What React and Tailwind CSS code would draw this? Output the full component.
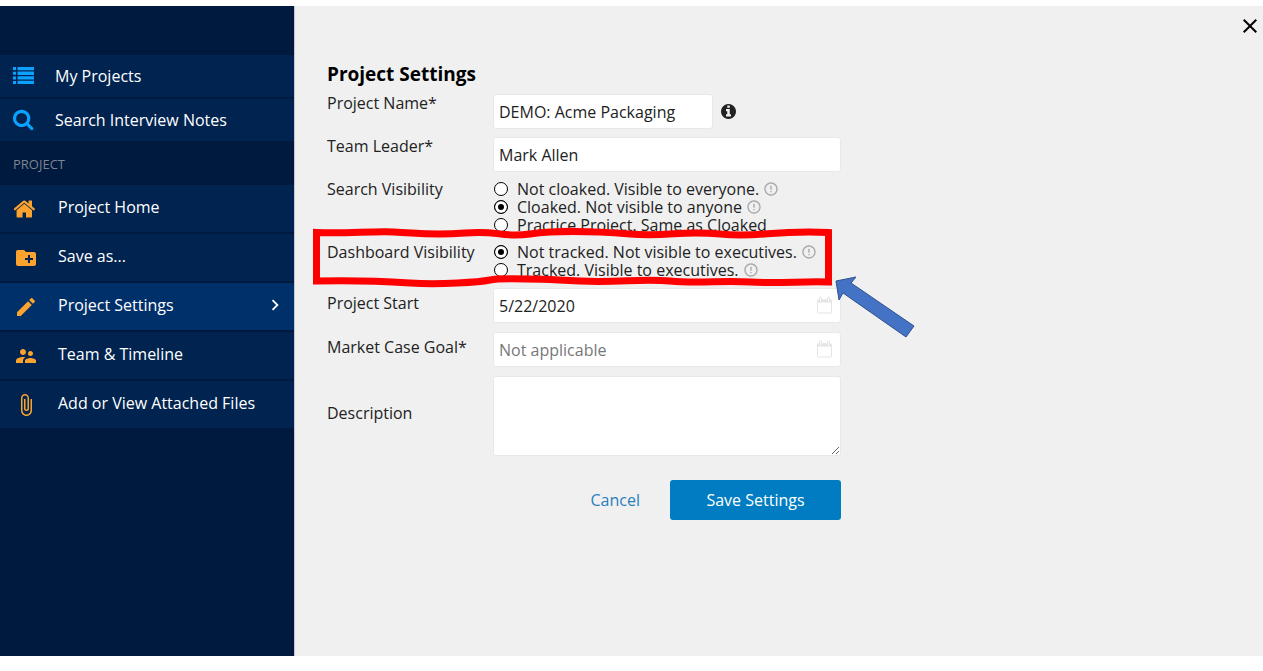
import React from 'react';
import {
  MdAttachFile,
  MdChevronRight,
  MdClose,
  MdCreateNewFolder,
  MdEdit,
  MdErrorOutline,
  MdSupervisorAccount,
} from 'react-icons/md';

function ListIcon() {
  return (
    <svg viewBox="0 0 22 18" width="22" height="18" fill="currentColor" aria-hidden="true">
      <path d="M0 0h3v3H0zM0 4.700h3v3H0zM0 9.400h3v3H0zM0 14h3v3H0z" />
      <path d="M4.500 0H21v3.300H4.500zM4.500 4.600H21v3.300H4.500zM4.500 9.200H21v3.300H4.500zM4.500 13.800H21v3.300H4.500z" />
    </svg>
  );
}

function SearchIcon() {
  return (
    <svg viewBox="64 64 1792 1792" width="22" height="22" fill="currentColor" aria-hidden="true">
      <path d="M1216 832q0-185-131.500-316.500t-316.500-131.500-316.500 131.500-131.500 316.500 131.500 316.500 316.500 131.500 316.500-131.500 131.500-316.500zm512 832q0 52-38 90t-90 38q-54 0-90-38l-343-342q-179 124-399 124-143 0-273.500-55.500t-225-150-150-225-55.500-273.500 55.500-273.500 150-225 225-150 273.500-55.500 273.500 55.500 225 150 150 225 55.500 273.500q0 220-124 399l343 343q37 37 37 90z" />
    </svg>
  );
}

function HomeIcon() {
  return (
    <svg viewBox="64 0 1792 1792" width="24" height="24" fill="currentColor" aria-hidden="true">
      <path d="M1408 992v480q0 26-19 45t-45 19h-384v-384h-256v384h-384q-26 0-45-19t-19-45v-480q0-1 .5-3t.5-3l575-474 575 474q1 2 1 6zm223-69l-62 74q-8 9-21 11h-3q-13 0-21-7l-692-577-692 577q-12 8-24 7-13-2-21-11l-62-74q-8-10-7-23.500t11-21.500l719-599q32-26 76-26t76 26l244 204v-195q0-14 9-23t23-9h192q14 0 23 9t9 23v408l219 182q10 8 11 21.500t-7 23.500z" />
    </svg>
  );
}

function InfoIcon() {
  return (
    <svg viewBox="128 128 1536 1536" width="15" height="15" fill="currentColor" aria-hidden="true">
      <path d="M1152 1376v-160q0-14-9-23t-23-9h-96v-512q0-14-9-23t-23-9h-320q-14 0-23 9t-9 23v160q0 14 9 23t23 9h96v320h-96q-14 0-23 9t-9 23v160q0 14 9 23t23 9h448q14 0 23-9t9-23zm-128-896v-160q0-14-9-23t-23-9h-192q-14 0-23 9t-9 23v160q0 14 9 23t23 9h192q14 0 23-9t9-23zm640 416q0 209-103 385.500t-279.500 279.500-385.500 103-385.500-103-279.500-279.500-103-385.500 103-385.500 279.500-279.500 385.500-103 385.500 103 279.500 279.500 103 385.500z" />
    </svg>
  );
}

function CalendarIcon() {
  return (
    <svg
      viewBox="0 0 16 18"
      className="pointer-events-none absolute right-2 top-2 h-[18px] w-4 text-[#e4e4e4]"
      aria-hidden="true"
    >
      <rect x="0.5" y="4" width="14" height="13" rx="1" fill="none" stroke="currentColor" />
      <path d="M0.500 3.500h14v3h-14z" fill="currentColor" />
      <path d="M3.500 2v3M11.500 2v3" stroke="currentColor" strokeWidth="3" strokeLinecap="round" />
      <path d="M3.500 2v3M11.500 2v3" stroke="#fff" strokeWidth="1" strokeLinecap="round" />
    </svg>
  );
}

const mainLinks = [
  { label: 'My Projects', icon: <ListIcon /> },
  { label: 'Search Interview Notes', icon: <SearchIcon /> },
];

const projectLinks = [
  { label: 'Project Home', icon: <HomeIcon /> },
  { label: 'Save as...', icon: <MdCreateNewFolder size={24} /> },
  { label: 'Project Settings', icon: <MdEdit size={24} />, active: true },
  { label: 'Team & Timeline', icon: <MdSupervisorAccount size={24} /> },
  { label: 'Add or View Attached Files', icon: <MdAttachFile size={24} /> },
];

function Sidebar() {
  return (
    <nav className="w-[295px] shrink-0 border-r border-[#c4c8d0] bg-[#00193e] pt-[49px] text-base text-white">
      <ul className="flex flex-col gap-[2px]">
        {mainLinks.map((link) => (
          <li key={link.label}>
            <a href="#" className="flex h-[42px] items-center gap-5 bg-[#00234f] pl-[13px]">
              <span className="flex w-[22px] text-[#0aa2ff]">{link.icon}</span>
              {link.label}
            </a>
          </li>
        ))}
      </ul>
      <h2 className="flex h-11 items-center pl-[13px] pt-1 text-[13px] text-[#7d8590]">PROJECT</h2>
      <ul className="flex flex-col gap-[2px]">
        {projectLinks.map((link) => (
          <li key={link.label}>
            <a
              href="#"
              className={`flex h-[47px] items-center gap-5 pb-1 pl-[14px] pr-2 ${link.active ? 'bg-[#00306a]' : 'bg-[#00234f]'}`}
            >
              <span className="flex w-6 pt-1 text-[#fba22f]">{link.icon}</span>
              <span className="flex-1">{link.label}</span>
              {link.active && <MdChevronRight size={22} />}
            </a>
          </li>
        ))}
      </ul>
    </nav>
  );
}

function RadioRow({ name, label, hint, defaultChecked }) {
  return (
    <div className="flex h-[18px] items-center pl-px">
      <label className="flex items-center gap-[9px]">
        <input
          type="radio"
          name={name}
          defaultChecked={defaultChecked}
          className="size-[14px] appearance-none rounded-full border border-black bg-white checked:bg-black checked:shadow-[inset_0_0_0_3px_#fff]"
        />
        {label}
      </label>
      {hint && <MdErrorOutline size={16} className="ml-1 text-[#a8a8a8]" />}
    </div>
  );
}

const field = 'block h-[35px] w-full rounded-[3px] border border-[#e8e8e8] bg-white px-[5px] text-base placeholder:text-[#777]';

function SettingsForm() {
  return (
    <form className="relative w-[514px] text-base text-[#222]">
      <h1 className="text-[19px] leading-6 font-bold text-black">Project Settings</h1>
      <div className="mt-2 grid grid-cols-[166px_1fr] gap-y-2 leading-[18px]">
        <label htmlFor="name">Project Name*</label>
        <div className="flex items-center gap-2">
          <div className="w-[220px]">
            <input id="name" className={field} defaultValue="DEMO: Acme Packaging" />
          </div>
          <InfoIcon />
        </div>

        <label htmlFor="leader">Team Leader*</label>
        <input id="leader" className={field} defaultValue="Mark Allen" />

        <span>Search Visibility</span>
        <div>
          <RadioRow name="search" label="Not cloaked. Visible to everyone." hint />
          <RadioRow name="search" label="Cloaked. Not visible to anyone" hint defaultChecked />
          <RadioRow name="search" label="Practice Project. Same as Cloaked" />
        </div>

        <span className="py-px">Dashboard Visibility</span>
        <div className="py-px">
          <RadioRow name="dashboard" label="Not tracked. Not visible to executives." hint defaultChecked />
          <RadioRow name="dashboard" label="Tracked. Visible to executives." hint />
        </div>
      </div>

      <div className="mt-2 grid grid-cols-[166px_1fr] gap-y-[9px] leading-[18px]">
        <label htmlFor="start" className="pt-[6px]">Project Start</label>
        <div className="relative">
          <input id="start" className={field} defaultValue="5/22/2020" />
          <CalendarIcon />
        </div>

        <label htmlFor="goal" className="pt-[6px]">Market Case Goal*</label>
        <div className="relative">
          <input id="goal" className={field} placeholder="Not applicable" />
          <CalendarIcon />
        </div>

        <label htmlFor="description" className="self-center pb-[6px]">Description</label>
        <textarea
          id="description"
          className="block h-20 w-full resize rounded-[3px] border border-[#e8e8e8] bg-white p-[5px] text-base"
        />
      </div>
      <div className="mt-6 flex items-center justify-end gap-[30px] text-base">
        <a href="#" className="text-[#2a7fbd]">Cancel</a>
        <button type="button" className="h-10 w-[171px] rounded-[3px] bg-[#007cc2] text-white">
          Save Settings
        </button>
      </div>
      <Callout />
    </form>
  );
}

// hand drawn box and arrow pointing at the dashboard options
function Callout() {
  return (
    <svg
      viewBox="313 225 604 115"
      width="604"
      height="115"
      className="pointer-events-none absolute -left-[14px] top-[163px] max-w-none"
      aria-hidden="true"
    >
      <path
        d="M316.500 232.500C345 234 370 231 394 232S430 236 465 233S500 238 530 234S590 231 630 234S680 230 720 234S770 230 828.500 232.500V282C800 281 780 284 750 282S700 284 670 281S620 283 580 281S500 278 490 280S440 285 410 283S350 280 316.500 281Z"
        fill="none"
        stroke="#ff0000"
        strokeWidth="7"
      />
      <path
        d="M836 281L856 277L851 283L914 326L906 337L843 293L839 300Z"
        fill="#4472c4"
        stroke="#2f528f"
      />
    </svg>
  );
}

export default function App() {
  return (
    <div className="flex min-h-screen bg-white pt-[6px] pb-[15px] font-['Open_Sans',sans-serif]">
      <Sidebar />
      <main className="flex flex-1 items-start justify-between bg-[#f0f0f0] pl-8">
        <div className="pt-14">
          <SettingsForm />
        </div>
        <button type="button" aria-label="Close" className="mt-2 mr-px text-black">
          <MdClose size={24} />
        </button>
      </main>
    </div>
  );
}
